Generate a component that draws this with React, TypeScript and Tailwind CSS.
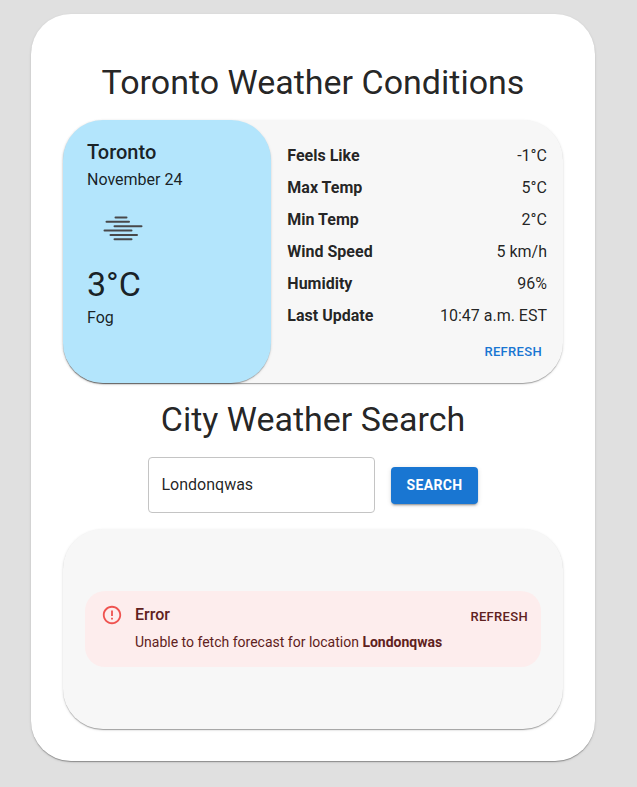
const CARD =
  "rounded-[40px] shadow-[0_2px_1px_-1px_rgba(0,0,0,0.2),0_1px_1px_0_rgba(0,0,0,0.14),0_1px_3px_0_rgba(0,0,0,0.12)]";

const conditions = [
  { label: "Feels Like", value: "-1°C" },
  { label: "Max Temp", value: "5°C" },
  { label: "Min Temp", value: "2°C" },
  { label: "Wind Speed", value: "5 km/h" },
  { label: "Humidity", value: "96%" },
  { label: "Last Update", value: "10:47 a.m. EST" },
];

function FogIcon() {
  return (
    <svg
      className="size-[72px]"
      viewBox="0 0 72 72"
      stroke="#48484a"
      strokeWidth="2"
      strokeLinecap="round"
      aria-hidden="true"
    >
      <path d="M28.5 25.5h11M19.5 29.8h22.5M27.5 34.3h27M17.5 38.6h27M23.5 43h26.5M27.5 47.3h17" />
    </svg>
  );
}

function ErrorIcon() {
  return (
    <svg className="mt-[13px] size-[22px] shrink-0" viewBox="0 0 24 24" fill="#ef5350" aria-hidden="true">
      <path d="M11 15h2v2h-2zm0-8h2v6h-2zm.99-5C6.47 2 2 6.48 2 12s4.47 10 9.99 10C17.52 22 22 17.52 22 12S17.52 2 11.99 2zM12 20c-4.42 0-8-3.58-8-8s3.58-8 8-8 8 3.58 8 8-3.58 8-8 8z" />
    </svg>
  );
}

function CurrentWeather() {
  return (
    <section className={`mb-4 grid grid-cols-[5fr_7fr] bg-[#f7f7f7] ${CARD}`}>
      <div className={`bg-[#b3e5fc] px-6 py-4 ${CARD}`}>
        <h2 className="text-xl leading-8 font-medium">Toronto</h2>
        <p>November 24</p>
        <FogIcon />
        <p className="mb-0.5 text-[34px] leading-10">3°C</p>
        <p>Fog</p>
      </div>
      <div className="flex flex-col px-4 pt-5 pb-[15px]">
        <dl>
          {conditions.map((c) => (
            <div key={c.label} className="flex justify-between leading-8">
              <dt className="font-bold">{c.label}</dt>
              <dd>{c.value}</dd>
            </div>
          ))}
        </dl>
        <button type="button" className="mt-1 self-end px-[5px] text-[13px] leading-8 font-medium tracking-wide text-[#1976d2] uppercase">
          Refresh
        </button>
      </div>
    </section>
  );
}

function SearchForm() {
  return (
    <form className="mb-4 flex items-center justify-center gap-4" onSubmit={(e) => e.preventDefault()}>
      <input
        aria-label="City"
        defaultValue="Londonqwas"
        className="h-14 w-[227px] min-w-0 rounded border border-[#c4c4c4] bg-white px-3 pb-0.5"
      />
      <button
        type="submit"
        className="h-[37px] rounded bg-[#1976d2] px-[15px] text-sm font-bold tracking-wide text-white uppercase shadow-[0_3px_1px_-2px_rgba(0,0,0,0.2),0_2px_2px_0_rgba(0,0,0,0.14),0_1px_5px_0_rgba(0,0,0,0.12)]"
      >
        Search
      </button>
    </form>
  );
}

function SearchResult() {
  return (
    <section className={`flex min-h-[200px] items-center bg-[#f7f7f7] px-[22px] ${CARD}`}>
      <div role="alert" className="flex w-full items-start gap-3 rounded-[20px] bg-[#fdeded] pr-2 pl-4 text-[#5f2120]">
        <ErrorIcon />
        <div className="flex-1 pt-3 pb-3.5">
          <h2 className="font-medium">Error</h2>
          <p className="mt-1 text-sm leading-[22px]">
            Unable to fetch forecast for location <strong>Londonqwas</strong>
          </p>
        </div>
        <button type="button" className="mt-[10px] px-[5px] text-[13px] leading-8 font-medium tracking-wide uppercase">
          Refresh
        </button>
      </div>
    </section>
  );
}

export default function App() {
  return (
    <div className="min-h-screen bg-[#e0e0e0] pt-[14px] pr-[11px] pb-6 font-[Roboto,sans-serif] text-base text-black/87">
      <main className={`mx-auto w-full max-w-[564px] bg-white px-8 pt-12 pb-8 ${CARD}`}>
        <h1 className="mb-[18px] text-center text-[34px] leading-10">Toronto Weather Conditions</h1>
        <CurrentWeather />
        <h1 className="mb-[18px] text-center text-[34px] leading-10">City Weather Search</h1>
        <SearchForm />
        <SearchResult />
      </main>
    </div>
  );
}
